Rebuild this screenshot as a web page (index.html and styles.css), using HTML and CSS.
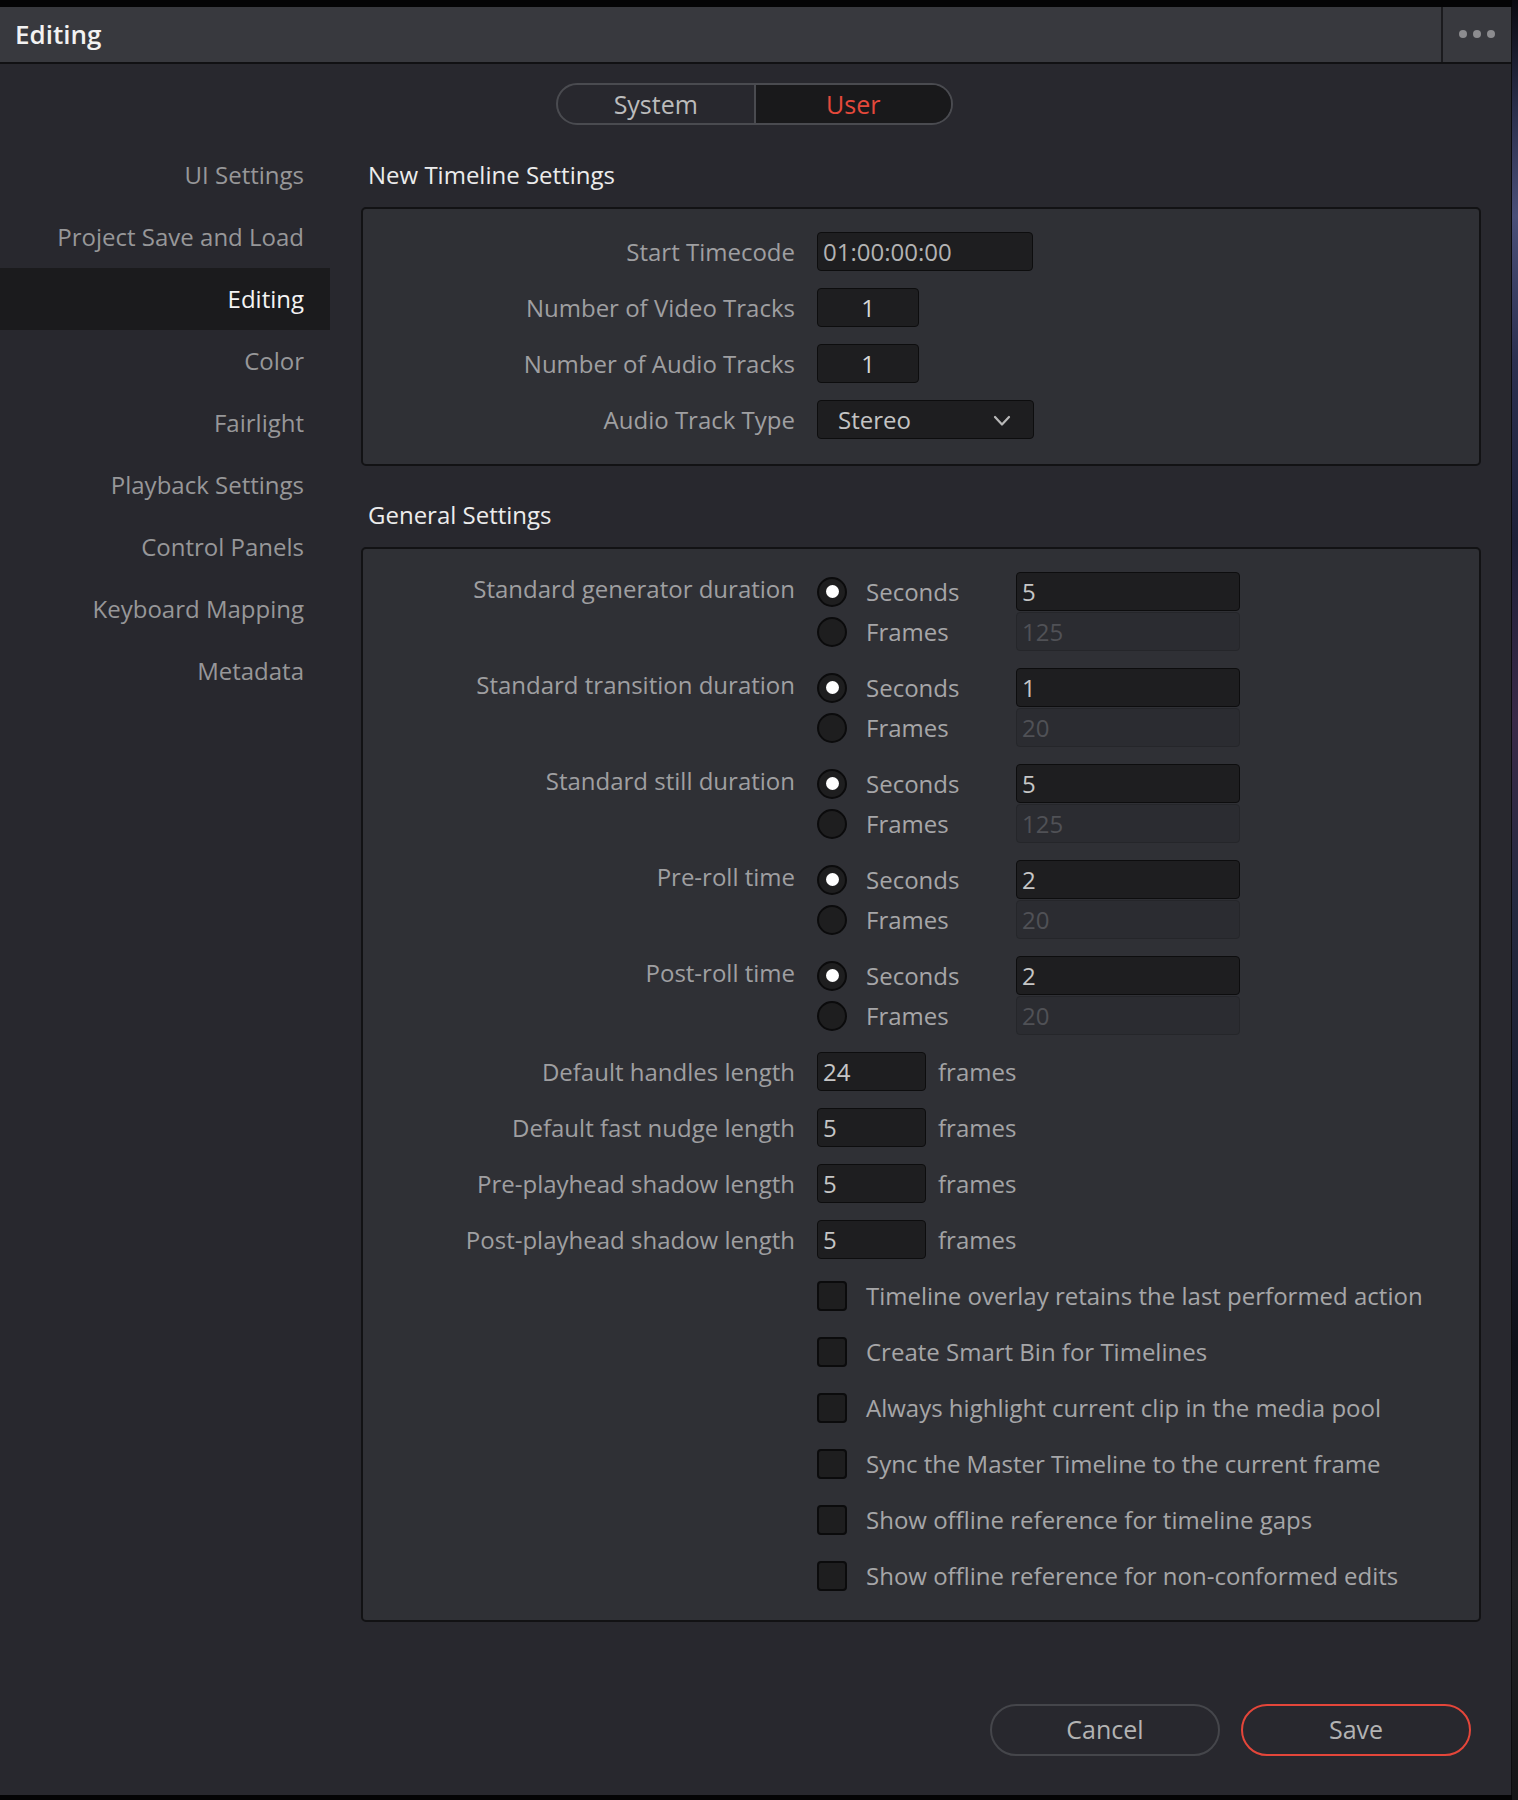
FILE: index.html
```html
<!DOCTYPE html>
<html>
<head>
<meta charset="utf-8">
<title>Editing</title>
<link rel="stylesheet" href="styles.css">
</head>
<body>
<div class="screen">
  <div class="window">
    <div class="titlebar">
      <div class="title">Editing</div>
      <div class="title-menu"><span class="dot"></span><span class="dot"></span><span class="dot"></span></div>
    </div>
    <div class="seg-row">
      <div class="seg">
        <div class="seg-item">System</div>
        <div class="seg-item active">User</div>
      </div>
    </div>
    <div class="body">
      <nav class="sidebar">
        <div class="nav-item">UI Settings</div>
        <div class="nav-item">Project Save and Load</div>
        <div class="nav-item selected">Editing</div>
        <div class="nav-item">Color</div>
        <div class="nav-item">Fairlight</div>
        <div class="nav-item">Playback Settings</div>
        <div class="nav-item">Control Panels</div>
        <div class="nav-item">Keyboard Mapping</div>
        <div class="nav-item">Metadata</div>
      </nav>
      <main class="main">
        <div class="heading">New Timeline Settings</div>
        <section class="panel panel-timeline">
          <div class="label">Start Timecode</div>
          <div class="ctl"><div class="field w-tc">01:00:00:00</div></div>
          <div class="label">Number of Video Tracks</div>
          <div class="ctl"><div class="field w-num center">1</div></div>
          <div class="label">Number of Audio Tracks</div>
          <div class="ctl"><div class="field w-num center">1</div></div>
          <div class="label">Audio Track Type</div>
          <div class="ctl">
            <div class="field select">
              <span>Stereo</span>
              <svg class="chev" width="18" height="12" viewBox="0 0 18 12"><path d="M2 2 L9 9.5 L16 2" fill="none" stroke="#b8b8b8" stroke-width="2.2" stroke-linecap="round" stroke-linejoin="round"/></svg>
            </div>
          </div>
        </section>

        <div class="heading heading-2">General Settings</div>
        <section class="panel panel-general">
          <div class="label group-label">Standard generator duration</div>
          <div class="group">
            <div class="sub"><span class="radio on"></span><span class="opt">Seconds</span><div class="field w-dur">5</div></div>
            <div class="sub"><span class="radio"></span><span class="opt">Frames</span><div class="field w-dur disabled">125</div></div>
          </div>

          <div class="label group-label">Standard transition duration</div>
          <div class="group">
            <div class="sub"><span class="radio on"></span><span class="opt">Seconds</span><div class="field w-dur">1</div></div>
            <div class="sub"><span class="radio"></span><span class="opt">Frames</span><div class="field w-dur disabled">20</div></div>
          </div>

          <div class="label group-label">Standard still duration</div>
          <div class="group">
            <div class="sub"><span class="radio on"></span><span class="opt">Seconds</span><div class="field w-dur">5</div></div>
            <div class="sub"><span class="radio"></span><span class="opt">Frames</span><div class="field w-dur disabled">125</div></div>
          </div>

          <div class="label group-label">Pre-roll time</div>
          <div class="group">
            <div class="sub"><span class="radio on"></span><span class="opt">Seconds</span><div class="field w-dur">2</div></div>
            <div class="sub"><span class="radio"></span><span class="opt">Frames</span><div class="field w-dur disabled">20</div></div>
          </div>

          <div class="label group-label">Post-roll time</div>
          <div class="group">
            <div class="sub"><span class="radio on"></span><span class="opt">Seconds</span><div class="field w-dur">2</div></div>
            <div class="sub"><span class="radio"></span><span class="opt">Frames</span><div class="field w-dur disabled">20</div></div>
          </div>

          <div class="label">Default handles length</div>
          <div class="ctl"><div class="field w-len">24</div><span class="unit">frames</span></div>
          <div class="label">Default fast nudge length</div>
          <div class="ctl"><div class="field w-len">5</div><span class="unit">frames</span></div>
          <div class="label">Pre-playhead shadow length</div>
          <div class="ctl"><div class="field w-len">5</div><span class="unit">frames</span></div>
          <div class="label">Post-playhead shadow length</div>
          <div class="ctl"><div class="field w-len">5</div><span class="unit">frames</span></div>

          <div class="check-row"><span class="check"></span><span class="opt">Timeline overlay retains the last performed action</span></div>
          <div class="check-row"><span class="check"></span><span class="opt">Create Smart Bin for Timelines</span></div>
          <div class="check-row"><span class="check"></span><span class="opt">Always highlight current clip in the media pool</span></div>
          <div class="check-row"><span class="check"></span><span class="opt">Sync the Master Timeline to the current frame</span></div>
          <div class="check-row"><span class="check"></span><span class="opt">Show offline reference for timeline gaps</span></div>
          <div class="check-row"><span class="check"></span><span class="opt">Show offline reference for non-conformed edits</span></div>
        </section>
      </main>
    </div>
    <footer class="footer">
      <div class="btn">Cancel</div>
      <div class="btn primary">Save</div>
    </footer>
  </div>
  <div class="desktop"></div>
</div>
</body>
</html>
```

FILE: styles.css
```css
* { box-sizing: border-box; }

html, body {
  margin: 0;
  padding: 0;
  background: #050506;
}

body {
  font-family: "Open Sans", "Noto Sans", sans-serif;
  font-size: 24px;
  color: #a3a3a3;
}

.screen {
  display: flex;
  width: 1518px;
  height: 1800px;
  padding-top: 7px;
  background: #040405;
}

.window {
  width: 1512px;
  height: 1788px;
  background: #28282e;
  display: flex;
  flex-direction: column;
  border-right: 1px solid #0c0c0e;
}

.desktop {
  flex: 1;
  margin-top: -7px;
  height: 1800px;
  background: linear-gradient(180deg, #0a0a10 0%, #2a2e4a 6%, #4a4f78 12%, #2c3050 20%, #1d2038 30%, #3a2a48 40%, #252a40 50%, #1a1e30 62%, #0e1018 75%, #202124 88%, #151517 100%);
}

/* title bar */
.titlebar {
  height: 57px;
  display: flex;
  align-items: stretch;
  background: #38393e;
  border-bottom: 2px solid #111113;
}

.title {
  flex: 1;
  padding-left: 15px;
  line-height: 55px;
  font-size: 26px;
  font-weight: 600;
  color: #f2f2f2;
}

.title-menu {
  width: 70px;
  border-left: 2px solid #1b1b1e;
  display: flex;
  align-items: center;
  justify-content: center;
  gap: 6px;
  padding-bottom: 2px;
}

.dot {
  width: 8px;
  height: 8px;
  border-radius: 50%;
  background: #8c8c8f;
}

/* segmented control */
.seg-row {
  display: flex;
  justify-content: center;
  padding: 19px 0 19px;
}

.seg {
  display: flex;
  width: 397px;
  height: 42px;
  margin-left: -2px;
  border: 2px solid #4a4b50;
  border-radius: 21px;
  overflow: hidden;
}

.seg-item {
  flex: 1;
  text-align: center;
  line-height: 38px;
  font-size: 25px;
  color: #bcbcbc;
}

.seg-item.active {
  background: #19191b;
  border-left: 2px solid #4a4b50;
  color: #e5493b;
}

/* body */
.body {
  display: flex;
  align-items: flex-start;
}

.sidebar {
  width: 330px;
  flex: none;
}

.nav-item {
  height: 62px;
  line-height: 62px;
  text-align: right;
  padding-right: 26px;
  color: #979799;
}

.nav-item.selected {
  background: #1b1b1d;
  color: #f4f4f4;
}

.main {
  width: 1120px;
  margin-left: 31px;
}

.heading {
  height: 63px;
  line-height: 62px;
  padding-left: 7px;
  color: #ececec;
}

.heading-2 {
  margin-top: 18px;
}

.panel {
  background: #2f3035;
  border: 2px solid #121214;
  border-radius: 5px;
  display: grid;
  grid-template-columns: 432px 1fr;
  column-gap: 22px;
  row-gap: 17px;
}

.panel-timeline {
  padding: 23px 0 25px;
}

.panel-general {
  padding: 23px 0 25px;
}

.label {
  text-align: right;
  line-height: 39px;
  height: 39px;
  color: #9f9fa1;
  white-space: nowrap;
}

.label.group-label {
  line-height: 33px;
}

.ctl {
  display: flex;
  align-items: center;
  height: 39px;
}

.field {
  height: 39px;
  line-height: 37px;
  background: #1e1e20;
  border: 1.5px solid #0d0d0e;
  border-radius: 4px;
  padding: 0 5px;
  color: #bdbdbd;
  white-space: nowrap;
}

.field.center {
  text-align: center;
  color: #d8d8d8;
}

.w-tc { width: 216px; color: #b3b3b3; }
.w-num { width: 102px; }
.w-dur { width: 224px; color: #c6c6c6; }
.w-len { width: 109px; color: #c6c6c6; }

.field.disabled {
  background: #2b2c31;
  border-color: #25262a;
  color: #505156;
}

.select {
  width: 217px;
  display: flex;
  align-items: center;
  justify-content: space-between;
  padding: 0 22px 0 20px;
  color: #c4c4c4;
}

.chev {
  display: block;
  margin-top: 2px;
}

.unit {
  margin-left: 12px;
  color: #a3a3a5;
}

.group {
  display: flex;
  flex-direction: column;
  gap: 1px;
}

.sub {
  display: flex;
  align-items: center;
  height: 39px;
}

.radio {
  width: 30px;
  height: 30px;
  flex: none;
  border-radius: 50%;
  background: #1e1e1f;
  border: 2px solid #0b0b0c;
  display: flex;
  align-items: center;
  justify-content: center;
  margin-right: 19px;
}

.radio.on::after {
  content: "";
  width: 13px;
  height: 13px;
  border-radius: 50%;
  background: #ffffff;
}

.opt {
  color: #a6a6a8;
  white-space: nowrap;
}

.sub .opt {
  width: 150px;
}

.check-row {
  grid-column: 2;
  display: flex;
  align-items: center;
  height: 39px;
}

.check {
  width: 30px;
  height: 30px;
  flex: none;
  background: #1e1e1f;
  border: 2px solid #0b0b0c;
  border-radius: 4px;
  margin-right: 19px;
}

/* footer */
.footer {
  margin-top: auto;
  display: flex;
  justify-content: flex-end;
  gap: 21px;
  padding: 0 40px 39px 0;
}

.btn {
  width: 230px;
  height: 52px;
  border: 2px solid #45464b;
  border-radius: 26px;
  text-align: center;
  line-height: 47px;
  font-size: 25px;
  color: #b3b3b3;
}

.btn.primary {
  border-color: #e4463a;
}
```
